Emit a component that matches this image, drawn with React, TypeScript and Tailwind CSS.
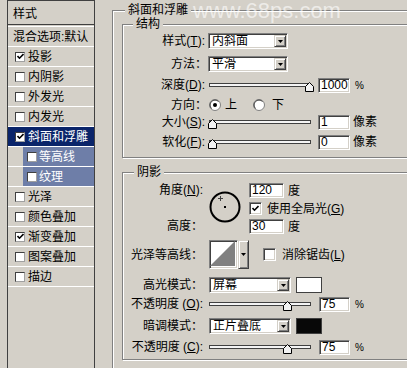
import React from 'react';

const sunken =
  'border border-t-[#808080] border-l-[#808080] border-r-white border-b-white shadow-[inset_1px_1px_0_#404040,inset_-1px_-1px_0_#d4d0c8]';
const raised =
  'border border-t-[#d4d0c8] border-l-[#d4d0c8] border-r-[#404040] border-b-[#404040] shadow-[inset_1px_1px_0_#fff,inset_-1px_-1px_0_#808080] bg-[#d4d0c8]';
const etched = 'border border-[#808080] shadow-[inset_1px_1px_0_#fff,1px_1px_0_#fff]';

const layers = [
  { name: '投影', checked: true },
  { name: '内阴影' },
  { name: '外发光' },
  { name: '内发光' },
  { name: '斜面和浮雕', checked: true, selected: true },
  { name: '等高线', sub: true },
  { name: '纹理', sub: true },
  { name: '光泽' },
  { name: '颜色叠加' },
  { name: '渐变叠加', checked: true },
  { name: '图案叠加' },
  { name: '描边' },
];

function Key({ k }: { k: string }) {
  return (
    <span>
      (<u className="underline-offset-1">{k}</u>)
    </span>
  );
}

function Tick() {
  return (
    <svg width="7" height="7" viewBox="0 0 7 7">
      <path d="M0.5 3 L2.5 5.2 L6.5 1" stroke="#000" strokeWidth="1.6" fill="none" />
    </svg>
  );
}

function SmallBox({ checked }: { checked?: boolean }) {
  return (
    <div className="w-[10px] h-[10px] shrink-0 bg-white border border-t-[#404040] border-l-[#404040] border-r-[#a0a0a0] border-b-[#a0a0a0] flex items-center justify-center">
      {checked && <Tick />}
    </div>
  );
}

function CheckBox({ checked }: { checked?: boolean }) {
  return (
    <div className={`w-[13px] h-[13px] shrink-0 bg-white flex items-center justify-center ${sunken}`}>
      {checked && <Tick />}
    </div>
  );
}

function Radio({ on }: { on?: boolean }) {
  return (
    <svg width="12" height="12" viewBox="0 0 12 12" className="shrink-0">
      <circle cx="6" cy="6" r="5.5" fill="#fff" stroke="#808080" />
      <path d="M2.5 9.5 A4.95 4.95 0 0 1 9.5 2.5" stroke="#404040" fill="none" />
      {on && <circle cx="6" cy="6" r="2" fill="#000" />}
    </svg>
  );
}

function Legend({ children, indent }: { children: React.ReactNode; indent: string }) {
  return <div className={`-mt-[8px] h-[14px] w-fit px-[3px] bg-[#d4d0c8] leading-[14px] ${indent}`}>{children}</div>;
}

function Select({ value, w }: { value: string; w: string }) {
  return (
    <div className={`flex h-[16px] p-[1px] bg-white ${w} ${sunken}`}>
      <span className="flex-1 pl-[2px] leading-[12px] whitespace-nowrap overflow-hidden">{value}</span>
      <div className={`w-[12px] h-full flex items-center justify-center ${raised}`}>
        <svg width="5" height="3" viewBox="0 0 5 3">
          <path d="M0 0 H5 L2.5 3 Z" fill="#000" />
        </svg>
      </div>
    </div>
  );
}

function Field({ value, w = 'w-[32px]' }: { value: string; w?: string }) {
  return <div className={`h-[15px] bg-white pl-[2px] leading-[13px] ${w} ${sunken}`}>{value}</div>;
}

function Slider({ pos }: { pos: number }) {
  return (
    <div className="relative w-[102px] h-[16px] shrink-0">
      <div className="mt-[6px] h-[4px] border border-[#404040] bg-[#f4f4f4]" />
      <svg className="absolute top-[5px]" style={{ left: pos - 4.5 }} width="9" height="10" viewBox="0 0 9 10">
        <polygon points="0.5,9.5 0.5,4.5 4.5,0.5 8.5,4.5 8.5,9.5" fill="#f2f2f2" stroke="#000" />
      </svg>
    </div>
  );
}

function Row({ label, top, lw, gap, h = 'h-[16px]', children }: { label: React.ReactNode; top: string; lw: string; gap: string; h?: string; children: React.ReactNode }) {
  return (
    <div className={`flex items-center ${h} ${top}`}>
      <div className={`${lw} shrink-0 text-right whitespace-nowrap leading-[14px]`}>{label}</div>
      <div className={`flex items-center ${gap}`}>{children}</div>
    </div>
  );
}

export default function App() {
  return (
    <div className="relative w-[407px] h-[368px] overflow-hidden bg-[#d4d0c8] flex text-[12px] text-black font-['Liberation_Sans','Noto_Sans_CJK_SC',sans-serif]">
      {/* layer list */}
      <div className="ml-[7px] w-[88px] h-[368px] shrink-0 border-x border-t border-[#404040]">
        <div className="h-[24px] border-b border-[#404040] pl-[5px] pt-[6px] leading-[14px]">样式</div>
        <div className="h-[2px] border-b border-white" />
        <div className="h-[20px] border-b border-white flex items-center pl-[5px] whitespace-nowrap overflow-hidden">混合选项:默认</div>
        {layers.map((l) => (
          <div key={l.name} className="h-[20px] border-b border-white flex">
            {l.sub ? (
              <div className="ml-[15px] flex-1 bg-[#6e7ea8] text-white flex items-center pl-[4px] gap-[2px]">
                <SmallBox checked={l.checked} />
                <span>{l.name}</span>
              </div>
            ) : (
              <div className={`flex-1 flex items-center pl-[7px] gap-[3px] ${l.selected ? 'bg-[#0a246a] text-white' : ''}`}>
                <SmallBox checked={l.checked} />
                <span className="whitespace-nowrap">{l.name}</span>
              </div>
            )}
          </div>
        ))}
      </div>

      {/* bevel and emboss */}
      <div className={`ml-[17px] mt-[10px] w-[320px] h-[420px] shrink-0 ${etched}`}>
        <Legend indent="ml-[12px]">斜面和浮雕</Legend>

        <div className={`ml-[9px] mt-[7px] w-[300px] pb-[7px] ${etched}`}>
          <Legend indent="ml-[10px]">结构</Legend>
          <Row label={<>样式<Key k="T" />:</>} top="mt-[2px]" lw="w-[84px] pr-[2px]" gap="ml-[1px]">
            <Select value="内斜面" w="w-[80px]" />
          </Row>
          <Row label="方法：" top="mt-[7px]" lw="w-[84px]" gap="ml-[1px]">
            <Select value="平滑" w="w-[80px]" />
          </Row>
          <Row label={<>深度<Key k="D" />:</>} top="mt-[5px]" lw="w-[84px] pr-[2px]" gap="ml-[2px]">
            <Slider pos={100} />
            <div className="ml-[7px]">
              <Field value="1000" />
            </div>
            <span className="ml-[5px] text-[10px]">%</span>
          </Row>
          <Row label="方向：" top="mt-[5px]" h="h-[14px]" lw="w-[84px]" gap="ml-[2px]">
            <Radio on />
            <span className="ml-[4px]">上</span>
            <div className="ml-[16px]">
              <Radio />
            </div>
            <span className="ml-[7px]">下</span>
          </Row>
          <Row label={<>大小<Key k="S" />:</>} top="mt-[2px]" lw="w-[84px] pr-[2px]" gap="ml-[2px]">
            <Slider pos={3.5} />
            <div className="ml-[7px]">
              <Field value="1" />
            </div>
            <span className="ml-[3px]">像素</span>
          </Row>
          <Row label={<>软化<Key k="F" />:</>} top="mt-[4px]" lw="w-[84px] pr-[2px]" gap="ml-[2px]">
            <Slider pos={3.5} />
            <div className="ml-[7px]">
              <Field value="0" />
            </div>
            <span className="ml-[3px]">像素</span>
          </Row>
        </div>

        <div className={`ml-[9px] mt-[14px] w-[300px] pb-[4px] ${etched}`}>
          <Legend indent="ml-[11px]">阴影</Legend>

          {/* angle / altitude */}
          <div className="flex mt-[4px]">
            <div className="w-[80px] h-[51px] shrink-0 flex flex-col justify-between text-right">
              <div className="h-[15px] leading-[14px]">
                角度<Key k="N" />:
              </div>
              <div className="h-[15px] leading-[14px]">高度：</div>
            </div>
            <svg className="ml-[6px] mt-[8px] shrink-0" width="32" height="32" viewBox="0 0 32 32">
              <circle cx="16" cy="16" r="14.5" fill="none" stroke="#000" strokeWidth="2" />
              <rect x="15" y="15" width="2" height="2" fill="#000" />
              <path d="M11.5 5 V10 M9 7.5 H14" stroke="#404040" strokeWidth="1" />
            </svg>
            <div className="ml-[8px] flex flex-col">
              <div className="flex items-center h-[15px]">
                <Field value="120" w="w-[35px]" />
                <span className="ml-[4px]">度</span>
              </div>
              <div className="flex items-center h-[13px] mt-[4px]">
                <CheckBox checked />
                <span className="ml-[5px] whitespace-nowrap">
                  使用全局光<Key k="G" />
                </span>
              </div>
              <div className="flex items-center h-[15px] mt-[4px]">
                <Field value="30" w="w-[35px]" />
                <span className="ml-[4px]">度</span>
              </div>
            </div>
          </div>

          {/* gloss contour */}
          <Row label="光泽等高线：" top="mt-[6px]" h="h-[29px]" lw="w-[80px]" gap="ml-[6px]">
            <div className={`w-[29px] h-[29px] bg-white ${sunken}`}>
              <svg width="25" height="25" viewBox="0 0 25 25" className="block">
                <polygon points="0,25 25,0 25,25" fill="#808080" />
              </svg>
            </div>
            <div className={`w-[11px] h-[29px] flex items-center justify-center ${raised}`}>
              <svg width="5" height="3" viewBox="0 0 5 3">
                <path d="M0 0 H5 L2.5 3 Z" fill="#000" />
              </svg>
            </div>
            <div className="ml-[14px]">
              <CheckBox />
            </div>
            <span className="ml-[6px] whitespace-nowrap">
              消除锯齿<Key k="L" />
            </span>
          </Row>

          <Row label="高光模式：" top="mt-[8px]" lw="w-[80px]" gap="ml-[6px]">
            <Select value="屏幕" w="w-[82px]" />
            <div className="ml-[5px] w-[26px] h-[16px] bg-white border border-[#404040]" />
          </Row>
          <Row label={<>不透明度 <Key k="O" />:</>} top="mt-[3px]" lw="w-[80px]" gap="ml-[6px]">
            <Slider pos={78} />
            <div className="ml-[8px]">
              <Field value="75" w="w-[31px]" />
            </div>
            <span className="ml-[5px] text-[10px]">%</span>
          </Row>
          <Row label="暗调模式：" top="mt-[6px]" lw="w-[80px]" gap="ml-[6px]">
            <Select value="正片叠底" w="w-[82px]" />
            <div className="ml-[5px] w-[26px] h-[16px] bg-[#080808] border border-[#404040]" />
          </Row>
          <Row label={<>不透明度 <Key k="C" />:</>} top="mt-[5px]" lw="w-[80px]" gap="ml-[6px]">
            <Slider pos={78} />
            <div className="ml-[8px]">
              <Field value="75" w="w-[31px]" />
            </div>
            <span className="ml-[5px] text-[10px]">%</span>
          </Row>
        </div>
      </div>

      <div className="absolute left-[193px] top-0 text-[22px] leading-[22px] text-white/60 pointer-events-none whitespace-nowrap">
        www.68ps.com
      </div>
    </div>
  );
}
